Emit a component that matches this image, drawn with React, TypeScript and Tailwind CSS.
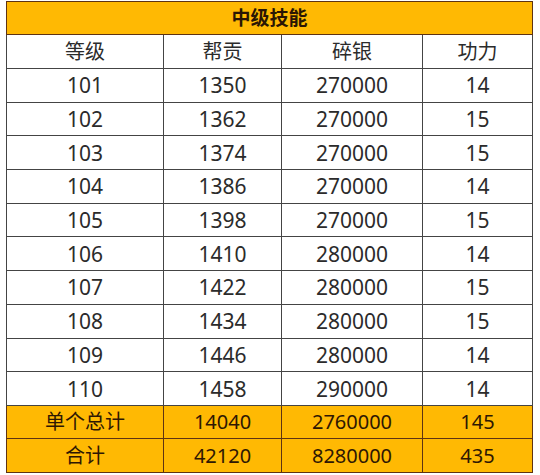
const rows: [string, string, string, string][] = [
  ["101", "1350", "270000", "14"],
  ["102", "1362", "270000", "15"],
  ["103", "1374", "270000", "15"],
  ["104", "1386", "270000", "14"],
  ["105", "1398", "270000", "15"],
  ["106", "1410", "280000", "14"],
  ["107", "1422", "280000", "15"],
  ["108", "1434", "280000", "15"],
  ["109", "1446", "280000", "14"],
  ["110", "1458", "290000", "14"],
];

const totals: [string, string, string, string][] = [
  ["单个总计", "14040", "2760000", "145"],
  ["合计", "42120", "8280000", "435"],
];

const font = {
  fontFamily: '"Noto Sans", "Noto Sans CJK SC", sans-serif',
};

export default function App() {
  return (
    <div className="h-[475px] w-[540px] bg-white pl-[6px] pt-[1px]" style={font}>
      <table className="w-[526px] table-fixed border-collapse text-center text-[20px] leading-none">
        <colgroup>
          <col className="w-[157px]" />
          <col className="w-[118px]" />
          <col className="w-[141px]" />
          <col className="w-[110px]" />
        </colgroup>
        <thead>
          <tr className="h-[33px] bg-[#ffb903]">
            <th
              colSpan={4}
              className="border-[1.5px] border-[#5e3312] text-[19px] font-bold text-[#2a1604]"
            >
              中级技能
            </th>
          </tr>
          <tr className="h-[34px] text-[#2b2b2b]">
            {["等级", "帮贡", "碎银", "功力"].map((h) => (
              <th key={h} className="border-[1.5px] border-[#444] font-normal">
                {h}
              </th>
            ))}
          </tr>
        </thead>
        <tbody>
          {rows.map((r) => (
            <tr key={r[0]} className="h-[33.7px] text-[#2b2b2b]">
              {r.map((c, i) => (
                <td key={i} className="border-[1.5px] border-[#444] pt-[1px] text-[21px]">
                  {c}
                </td>
              ))}
            </tr>
          ))}
          {totals.map((r) => (
            <tr key={r[0]} className="h-[33.5px] bg-[#ffb903] text-[#2e1703]">
              {r.map((c, i) => (
                <td key={i} className="border-[1.5px] border-[#5e3312] text-[20px]">
                  {c}
                </td>
              ))}
            </tr>
          ))}
        </tbody>
      </table>
    </div>
  );
}
